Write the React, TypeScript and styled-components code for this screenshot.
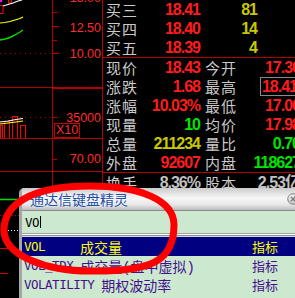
import React from 'react';
import styled, { createGlobalStyle } from 'styled-components';

const GRID = '#b40000';
const CJK = `"Noto Sans CJK SC", "Noto Sans", sans-serif`;
const NUM = `"Liberation Sans", Arial, sans-serif`;
const MONO = `"DejaVu Sans Mono", "Liberation Mono", "Noto Sans CJK SC", monospace`;

const GlobalStyle = createGlobalStyle`
  html, body {
    margin: 0;
    padding: 0;
    background: #000;
  }
  #root {
    width: 295px;
    height: 298px;
  }
`;

const Screen = styled.div`
  position: relative;
  width: 295px;
  height: 298px;
  overflow: hidden;
  background: #000;
  display: flex;
  align-items: flex-start;
`;

// left side: the intraday chart
const ChartColumn = styled.div`
  width: 102px;
  height: 298px;
  flex: none;
  border-right: 1px solid ${GRID};
  display: flex;
  flex-direction: column;
`;

const Pane = styled.div<{ $h?: number }>`
  display: flex;
  flex: ${p => (p.$h ? 'none' : '1')};
  height: ${p => (p.$h ? `${p.$h}px` : 'auto')};
  border-bottom: ${p => (p.$h ? `1px solid ${GRID}` : 'none')};
`;

const Plot = styled.div`
  width: 52px;
  flex: none;
  border-right: 1px solid ${GRID};
  position: relative;
  overflow: hidden;

  svg {
    display: block;
  }
`;

const Axis = styled.div<{ $boxTop?: boolean }>`
  flex: 1;
  position: relative;
  overflow: hidden;
  border-top: ${p => (p.$boxTop ? `1px solid ${GRID}` : 'none')};
`;

const Tick = styled.span<{ $long?: boolean }>`
  position: absolute;
  left: 0;
  width: ${p => (p.$long ? '6px' : '4px')};
  height: 1px;
  background: ${GRID};
`;

const AxisLabel = styled.span`
  position: absolute;
  right: 1px;
  transform: translateY(-50%);
  font-family: ${NUM};
  font-size: 12.5px;
  line-height: 1;
  color: #ff2a2a;
`;

const ScaleBox = styled.span`
  position: absolute;
  left: 1px;
  top: 34px;
  height: 13px;
  padding: 0 1px;
  border: 1px solid #c80000;
  font-family: ${NUM};
  font-size: 12.5px;
  line-height: 13px;
  color: #ff2a2a;
`;

// right side: quote panel
const QuotePanel = styled.div`
  width: 192px;
  flex: none;
  overflow: hidden;
  display: flex;
  flex-direction: column;
`;

const Section = styled.div<{ $rule?: boolean }>`
  border-bottom: ${p => (p.$rule ? `1px solid ${GRID}` : 'none')};
`;

const Row = styled.div`
  display: flex;
  align-items: center;
  height: 19px;
  padding-left: 3px;
  white-space: nowrap;
`;

const Label = styled.span<{ $gap?: boolean }>`
  flex: none;
  width: 32px;
  margin-left: ${p => (p.$gap ? '5px' : '0')};
  font-family: ${CJK};
  font-size: 15px;
  letter-spacing: 1px;
  line-height: 19px;
  color: #cacaca;
`;

const Value = styled.span<{ $w: number; $color: string }>`
  flex: none;
  width: ${p => p.$w}px;
  text-align: right;
  font-family: ${NUM}, ${CJK};
  font-weight: bold;
  font-size: 16px;
  letter-spacing: -1px;
  line-height: 19px;
  color: ${p => p.$color};
`;

const Boxed = styled.span`
  display: inline-block;
  height: 17px;
  line-height: 17px;
  padding: 0 2px 0 1px;
  border: 1px solid #8a8a8a;
  vertical-align: top;
`;

// keyboard wizard popup
const Sprite = styled.div`
  position: absolute;
  left: 19px;
  top: 188px;
  width: 279px;
  height: 116px;
  border-left: 3px solid #a6a6a6;
  border-top-left-radius: 5px;
  background: #cce8cf;
  display: flex;
  flex-direction: column;
  overflow: hidden;
`;

const TitleBar = styled.div`
  height: 22px;
  flex: none;
  display: flex;
  align-items: center;
  justify-content: space-between;
  padding: 0 2px 0 8px;
  background: linear-gradient(#cbcbcb, #f7f7f7 45%, #e8e8e8 75%, #bcbcbc);
`;

const Title = styled.span`
  font-family: ${CJK};
  font-size: 14px;
  line-height: 22px;
  color: #1d4ea8;
  text-shadow: 0 0 2px #fff;
`;

const InputArea = styled.div`
  height: 22px;
  flex: none;
  display: flex;
  align-items: center;
  padding-left: 3px;
  border-top: 1px solid #8c8c8c;
  font-family: ${MONO};
  font-size: 12.5px;
  letter-spacing: -0.5px;
  color: #000;
`;

const Caret = styled.span`
  width: 1px;
  height: 12px;
  margin-left: 1px;
  background: #000;
`;

const Divider = styled.div`
  height: 4px;
  flex: none;
  background: linear-gradient(#a0a0a0 0 1px, #ffffff 1px 2px, #8c8c8c 2px 3px, #d8d8d8 3px 4px);
`;

const ListRow = styled.div<{ $active?: boolean }>`
  height: 19px;
  flex: none;
  display: flex;
  align-items: center;
  padding-left: 2px;
  white-space: pre;
  background: ${p => (p.$active ? '#000080' : 'transparent')};
  color: ${p => (p.$active ? '#ffff00' : '#44108c')};
`;

const Code = styled.span`
  flex: none;
  min-width: 49px;
  padding-right: 7px;
  font-family: ${MONO};
  font-size: 12.5px;
  letter-spacing: -0.5px;
`;

const Name = styled.span`
  flex: 1;
  font-family: "Liberation Mono", ${CJK};
  font-size: 14px;
`;

const Kind = styled.span`
  flex: none;
  width: 49px;
  font-family: ${CJK};
  font-size: 13px;
`;

const Annotation = styled.svg`
  position: absolute;
  left: 0;
  top: 0;
  pointer-events: none;
`;

interface BidRow {
  label: string;
  price: string;
  vol: string;
}

interface StatRow {
  l1: string;
  v1: string;
  c1: string;
  l2: string;
  v2: string;
  c2: string;
  boxed?: boolean;
}

const RED = '#ff1c1c';
const GREEN = '#00e400';
const YELLOW = '#c8c800';
const GREY = '#c0c0c0';

const bids: BidRow[] = [
  { label: '买三', price: '18.41', vol: '81' },
  { label: '买四', price: '18.40', vol: '14' },
  { label: '买五', price: '18.39', vol: '4' },
];

const stats: StatRow[] = [
  { l1: '现价', v1: '18.43', c1: RED, l2: '今开', v2: '17.30', c2: RED },
  { l1: '涨跌', v1: '1.68', c1: RED, l2: '最高', v2: '18.41', c2: RED, boxed: true },
  { l1: '涨幅', v1: '10.03%', c1: RED, l2: '最低', v2: '17.00', c2: RED },
  { l1: '现量', v1: '10', c1: GREEN, l2: '均价', v2: '17.98', c2: RED },
  { l1: '总量', v1: '211234', c1: YELLOW, l2: '量比', v2: '0.70', c2: GREEN },
  { l1: '外盘', v1: '92607', c1: RED, l2: '内盘', v2: '118627', c2: GREEN },
];

const matches = [
  { code: 'VOL', name: '成交量', kind: '指标' },
  { code: 'VOL_TDX', name: '成交量(盘中虚拟)', kind: '指标' },
  { code: 'VOLATILITY', name: '期权波动率', kind: '指标' },
];

const PriceLines = () => (
  <svg width="52" height="87">
    <rect x="0" y="0" width="2" height="2" fill="#ff00ff" />
    <rect x="-1" y="5.5" width="4" height="8" fill="none" stroke="#ff0000" />
    <rect x="8.5" y="-2" width="3" height="5" fill="none" stroke="#ff0000" />
    <polyline points="3,6 8,4.5 13,3 18,1 22,0" fill="none" stroke="#ffffff" strokeWidth="1.2" />
    <polyline points="0,23 5,22.5 10,21.5 15,20 20,18.5 23,17" fill="none" stroke="#ffff00" strokeWidth="1.2" />
    <polyline points="0,40 5,39 10,37.5 15,35 20,32 23,30" fill="none" stroke="#00e000" strokeWidth="1.4" />
    <line x1="0" y1="53.5" x2="52" y2="53.5" stroke="#b00000" strokeDasharray="1 4" />
  </svg>
);

const VolumeBars = () => (
  <svg width="52" height="50">
    <line x1="0" y1="29.5" x2="52" y2="29.5" stroke="#b00000" strokeDasharray="1 4" />
    <rect x="0.5" y="37.5" width="2" height="13" fill="none" stroke="#ff0000" />
    <rect x="4.5" y="33.5" width="5" height="17" fill="none" stroke="#ff0000" />
    <rect x="12.5" y="28.5" width="5" height="22" fill="none" stroke="#ff0000" />
    <rect x="20.5" y="37.5" width="5" height="13" fill="none" stroke="#ff0000" />
    <polyline points="0,34 8,33 16,31.5 23,30.5" fill="none" stroke="#ffffff" strokeWidth="1.2" />
    <polyline points="0,36 8,35 16,34 23,33" fill="none" stroke="#ffff00" strokeWidth="1.2" />
  </svg>
);

const LowerLines = () => (
  <svg width="52" height="126">
    <line x1="0" y1="27.5" x2="18" y2="27.5" stroke="#00e000" strokeWidth="1.5" />
    <line x1="0" y1="43.5" x2="22" y2="43.5" stroke="#c00000" strokeDasharray="1 2" />
    <line x1="8" y1="58.5" x2="18" y2="58.5" stroke="#ffffff" strokeDasharray="1 2" />
    <line x1="0" y1="76.5" x2="8" y2="76.5" stroke="#d00000" />
    <line x1="0" y1="101.5" x2="8" y2="101.5" stroke="#d00000" />
  </svg>
);

const CloseIcon = () => (
  <svg width="12" height="12" viewBox="0 0 12 12">
    <defs>
      <radialGradient id="cg" cx="0.4" cy="0.35" r="0.7">
        <stop offset="0" stopColor="#ffffff" />
        <stop offset="1" stopColor="#b4b4b4" />
      </radialGradient>
    </defs>
    <circle cx="6" cy="6" r="5.3" fill="url(#cg)" stroke="#8c8c8c" />
    <path d="M3.8 3.8 L8.2 8.2 M8.2 3.8 L3.8 8.2" stroke="#7a7a7a" strokeWidth="1.4" />
  </svg>
);

export default function App() {
  return (
    <>
      <GlobalStyle />
      <Screen>
        <ChartColumn>
          <Pane $h={87}>
            <Plot>
              <PriceLines />
            </Plot>
            <Axis>
              <Tick style={{ top: 12 }} />
              <Tick style={{ top: 26 }} $long />
              <Tick style={{ top: 40 }} />
              <Tick style={{ top: 53 }} $long />
              <AxisLabel style={{ top: -2 }}>15.00</AxisLabel>
              <AxisLabel style={{ top: 27.5 }}>12.50</AxisLabel>
              <AxisLabel style={{ top: 53.5 }}>10.00</AxisLabel>
            </Axis>
          </Pane>
          <Pane $h={50}>
            <Plot>
              <VolumeBars />
            </Plot>
            <Axis $boxTop>
              <Tick style={{ top: 28 }} />
              <AxisLabel style={{ top: 28.5 }}>35000</AxisLabel>
              <ScaleBox>X10</ScaleBox>
            </Axis>
          </Pane>
          <Pane $h={32}>
            <Plot />
            <Axis>
              <Tick style={{ top: 20 }} />
              <AxisLabel style={{ top: 19.5 }}>70.00</AxisLabel>
            </Axis>
          </Pane>
          <Pane>
            <Plot>
              <LowerLines />
            </Plot>
            <Axis />
          </Pane>
        </ChartColumn>

        <QuotePanel>
          <Section $rule>
            {bids.map(b => (
              <Row key={b.label}>
                <Label>{b.label}</Label>
                <Value $w={62} $color={RED}>{b.price}</Value>
                <Value $w={57} $color={YELLOW}>{b.vol}</Value>
              </Row>
            ))}
          </Section>
          <Section $rule>
            {stats.map(s => (
              <Row key={s.l1}>
                <Label>{s.l1}</Label>
                <Value $w={62} $color={s.c1}>{s.v1}</Value>
                <Label $gap>{s.l2}</Label>
                <Value $w={63} $color={s.c2}>
                  {s.boxed ? <Boxed>{s.v2}</Boxed> : s.v2}
                </Value>
              </Row>
            ))}
          </Section>
          <Section>
            <Row>
              <Label>换手</Label>
              <Value $w={62} $color={GREY}>8.36%</Value>
              <Label $gap>股本</Label>
              <Value $w={63} $color={GREY}>2.53亿</Value>
            </Row>
          </Section>
        </QuotePanel>

        <Sprite>
          <TitleBar>
            <Title>通达信键盘精灵</Title>
            <CloseIcon />
          </TitleBar>
          <InputArea>
            VO
            <Caret />
          </InputArea>
          <Divider />
          {matches.map((m, i) => (
            <ListRow key={m.code} $active={i === 0}>
              <Code>{m.code}</Code>
              <Name>{m.name}</Name>
              <Kind>{m.kind}</Kind>
            </ListRow>
          ))}
        </Sprite>

        <Annotation width="295" height="298">
          <path
            d="M 4 230 C 4 205, 30 186, 90 186 C 140 186, 174 200, 174 225 C 174 262, 150 271, 95 271 C 45 272, 4 255, 4 230 Z"
            fill="none"
            stroke="#ff0000"
            strokeWidth="7"
          />
        </Annotation>
      </Screen>
    </>
  );
}
